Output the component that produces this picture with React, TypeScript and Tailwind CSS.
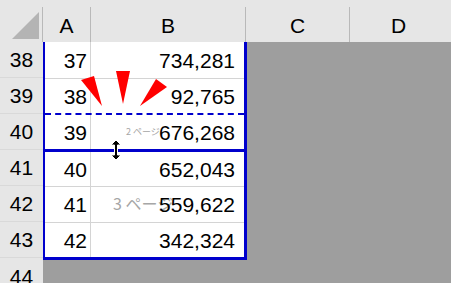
const rows = [
  { n: 38, a: 37, b: "734,281", h: "h-[37px] border-b border-[#d4d4d4]" },
  { n: 39, a: 38, b: "92,765", h: "h-[36px] border-b-2 border-dashed border-[#0000cc]" },
  { n: 40, a: 39, b: "676,268", h: "h-[37px] border-b-[3px] border-[#0000cc]" },
  { n: 41, a: 40, b: "652,043", h: "h-[35px] border-b border-[#d4d4d4]" },
  { n: 42, a: 41, b: "559,622", h: "h-[36px] border-b border-[#d4d4d4]" },
  { n: 43, a: 42, b: "342,324", h: "h-[34px]" },
];

const ColHead = ({ label, w }: { label: string; w: string }) => (
  <div className={`${w} h-[42px] flex items-end shrink-0`}>
    <div className="h-[35px] w-full border-r border-[#b9b9b9] flex items-center justify-center pt-[2px]">
      {label}
    </div>
  </div>
);

export default function App() {
  return (
    <div
      className="relative w-[451px] h-[283px] overflow-hidden bg-[#9e9e9e] text-[21px] text-black leading-none"
      style={{ fontFamily: '"Liberation Sans", Arial, sans-serif' }}
    >
      {/* column headers */}
      <div className="flex h-[42px] bg-[#e6e6e6]">
        <div className="w-[43px] h-[42px] flex items-end shrink-0">
          <div className="h-[35px] w-full border-r border-[#b9b9b9] relative">
            <svg width="43" height="35" className="absolute left-0 top-0">
              <polygon points="12,32 39,5 39,32" fill="#b4b4b4" />
            </svg>
          </div>
        </div>
        <ColHead label="A" w="w-[48px]" />
        <ColHead label="B" w="w-[155px]" />
        <ColHead label="C" w="w-[104px]" />
        <div className="flex-1 h-[42px] flex items-end">
          <div className="h-[35px] w-full flex items-center justify-center pt-[2px] pr-[4px]">D</div>
        </div>
      </div>

      <div className="flex">
        {/* row headers */}
        <div className="w-[43px] shrink-0 flex flex-col bg-[#e6e6e6]">
          {[38, 39, 40, 41, 42, 43].map((n) => (
            <div
              key={n}
              className="h-[36px] flex items-center justify-center border-b border-[#d9d9d9] last:border-b-0"
            >
              {n}
            </div>
          ))}
          <div className="h-[25px] flex items-center justify-center pt-[12px]">44</div>
        </div>

        {/* print area */}
        <div className="w-[204px] shrink-0 self-start bg-white border-l-2 border-r-[3px] border-b-[3px] border-[#0000cc]">
          {rows.map((r) => (
            <div key={r.n} className={`flex ${r.h}`}>
              <div className="w-[46px] border-r border-[#d4d4d4] flex items-center justify-end pr-[3px]">
                {r.a}
              </div>
              <div className="relative flex-1 flex items-center justify-end pr-[9px]">
                {r.n === 40 && (
                  <span
                    className="absolute left-[35px] top-[12px] text-[9px] text-[#a6a6a6]"
                    style={{ fontFamily: '"Noto Sans CJK JP", sans-serif' }}
                  >
                    2 ページ
                  </span>
                )}
                {r.n === 42 && (
                  <span
                    className="absolute left-[22px] top-[8px] text-[16px] text-[#a6a6a6]"
                    style={{ fontFamily: '"Noto Sans CJK JP", sans-serif' }}
                  >
                    3 ページ
                  </span>
                )}
                <span className="relative">{r.b}</span>
              </div>
            </div>
          ))}
        </div>
      </div>

      {/* page-break drag hints */}
      <svg width="451" height="283" className="absolute left-0 top-0 pointer-events-none">
        <polygon points="81,80 94,76 102,106" fill="#ff0000" />
        <polygon points="116,71 130,71 123,104" fill="#ff0000" />
        <polygon points="156,79 167,87 140,106" fill="#ff0000" />
        <g transform="translate(116 150)">
          <path
            d="M0,-10 L-5,-5 L-1.5,-5 L-1.5,5 L-5,5 L0,10 L5,5 L1.5,5 L1.5,-5 L5,-5 Z"
            fill="#000"
            stroke="#fff"
            strokeWidth="1"
          />
        </g>
      </svg>
    </div>
  );
}
